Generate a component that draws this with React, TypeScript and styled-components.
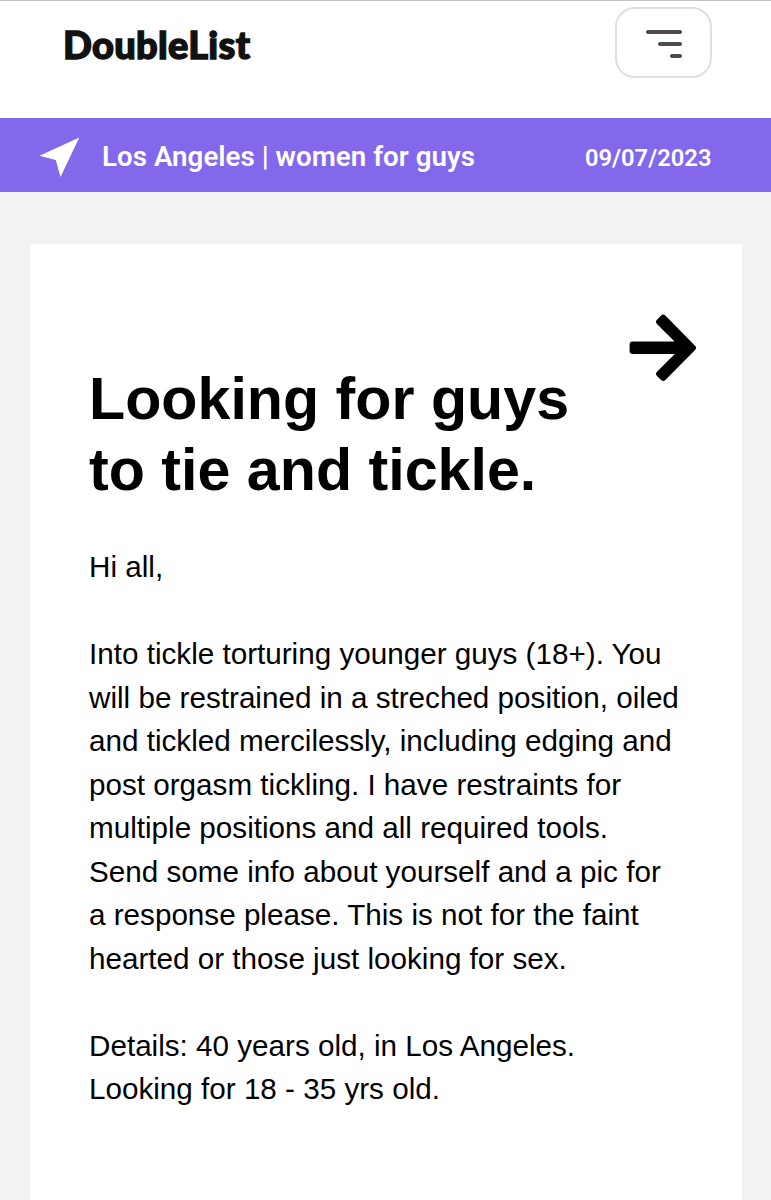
import React from "react";
import styled, { createGlobalStyle } from "styled-components";

const GlobalStyle = createGlobalStyle`
  *, *::before, *::after { box-sizing: border-box; }
  body {
    margin: 0;
    background: #f0f2f4;
    font-family: "Liberation Sans", Arial, sans-serif;
    color: #000;
  }
`;

const Page = styled.div`
  display: flex;
  flex-direction: column;
  height: 1200px;
  overflow: hidden;
`;

const Header = styled.header`
  display: flex;
  justify-content: space-between;
  align-items: flex-start;
  flex: none;
  height: 118px;
  padding: 6px 59px 0 63px;
  background: #fff;
  border-top: 1.5px solid #c2c2c2;
`;

const Logo = styled.div`
  padding-top: 13px;
  font: 900 38px/48px Lato, sans-serif;
  letter-spacing: 0.3px;
  color: #111;
  white-space: nowrap;
  -webkit-text-stroke: 1.4px #111;
`;

const MenuButton = styled.button`
  display: flex;
  flex-direction: column;
  align-items: flex-end;
  justify-content: center;
  gap: 8px;
  width: 97px;
  height: 71px;
  padding: 2px 28px 0 0;
  border: 2px solid #dfdfdf;
  border-radius: 20px;
  background: #fff;
`;

const MenuLine = styled.span<{ $width: number }>`
  width: ${(p) => p.$width}px;
  height: 4px;
  border-radius: 2px;
  background: #4f4b4f;
`;

const LocationBar = styled.div`
  display: flex;
  align-items: center;
  flex: none;
  height: 74.4px;
  padding: 2px 59.5px 0 39px;
  background: #8468eb;
  color: #fff;
  font-family: Roboto, sans-serif;
  white-space: nowrap;
`;

const PlaneIcon = styled.svg`
  flex: none;
  width: 41px;
  height: 41px;
  margin-right: 22px;
`;

const Place = styled.div`
  flex: 1;
  font-size: 27.7px;
  font-weight: 600;
  letter-spacing: 0.04px;
`;

const PostDate = styled.div`
  padding-top: 3px;
  font-size: 23.75px;
  font-weight: 600;
`;

const Card = styled.main`
  display: flex;
  flex-direction: column;
  flex: 1;
  margin: 52px 29.5px 0;
  padding: 69px 45px 0 59.5px;
  background: #fff;
`;

const NextButton = styled.a`
  display: flex;
  align-self: flex-end;
  height: 70px;
  margin-bottom: -20.5px;
`;

const Title = styled.h1`
  margin: 0;
  font-size: 59.2px;
  line-height: 71.2px;
  font-weight: 700;
  white-space: nowrap;
`;

const Body = styled.div`
  display: flex;
  flex-direction: column;
  gap: 43.5px;
  margin-top: 40px;
  font-size: 29.65px;
  line-height: 43.5px;
  white-space: nowrap;
`;

const Paragraph = styled.p`
  margin: 0;
`;

const Line = styled.span`
  display: block;
`;

const paragraphs = [
  ["Hi all,"],
  [
    "Into tickle torturing younger guys (18+). You",
    "will be restrained in a streched position, oiled",
    "and tickled mercilessly, including edging and",
    "post orgasm tickling. I have restraints for",
    "multiple positions and all required tools.",
    "Send some info about yourself and a pic for",
    "a response please. This is not for the faint",
    "hearted or those just looking for sex.",
  ],
  ["Details: 40 years old, in Los Angeles.", "Looking for 18 - 35 yrs old."],
];

export default function App() {
  return (
    <>
      <GlobalStyle />
      <Page>
        <Header>
          <Logo>DoubleList</Logo>
          <MenuButton aria-label="Menu">
            <MenuLine $width={36} />
            <MenuLine $width={24} />
            <MenuLine $width={12} />
          </MenuButton>
        </Header>
        <LocationBar>
          <PlaneIcon viewBox="0 0 41 41" aria-hidden="true">
            <path d="M40.3 1.4 21.5 41 16.8 24 0.5 19.8Z" fill="#fff" />
          </PlaneIcon>
          <Place>Los Angeles | women for guys</Place>
          <PostDate>09/07/2023</PostDate>
        </LocationBar>
        <Card>
          <NextButton aria-label="Next post">
            <svg width="70" height="70" viewBox="0 0 70 70" aria-hidden="true">
              <path
                d="M36.2 4.7 65.9 34.8 36.2 64.9 32.1 60.8 54.9 38.1H5.6V31.5H54.9L32.1 8.8Z"
                stroke="#000"
                strokeWidth="6"
                strokeLinejoin="round"
              />
            </svg>
          </NextButton>
          <Title>
            <Line>Looking for guys</Line>
            <Line>to tie and tickle.</Line>
          </Title>
          <Body>
            {paragraphs.map((lines, i) => (
              <Paragraph key={i}>
                {lines.map((line) => (
                  <Line key={line}>{line}</Line>
                ))}
              </Paragraph>
            ))}
          </Body>
        </Card>
      </Page>
    </>
  );
}
